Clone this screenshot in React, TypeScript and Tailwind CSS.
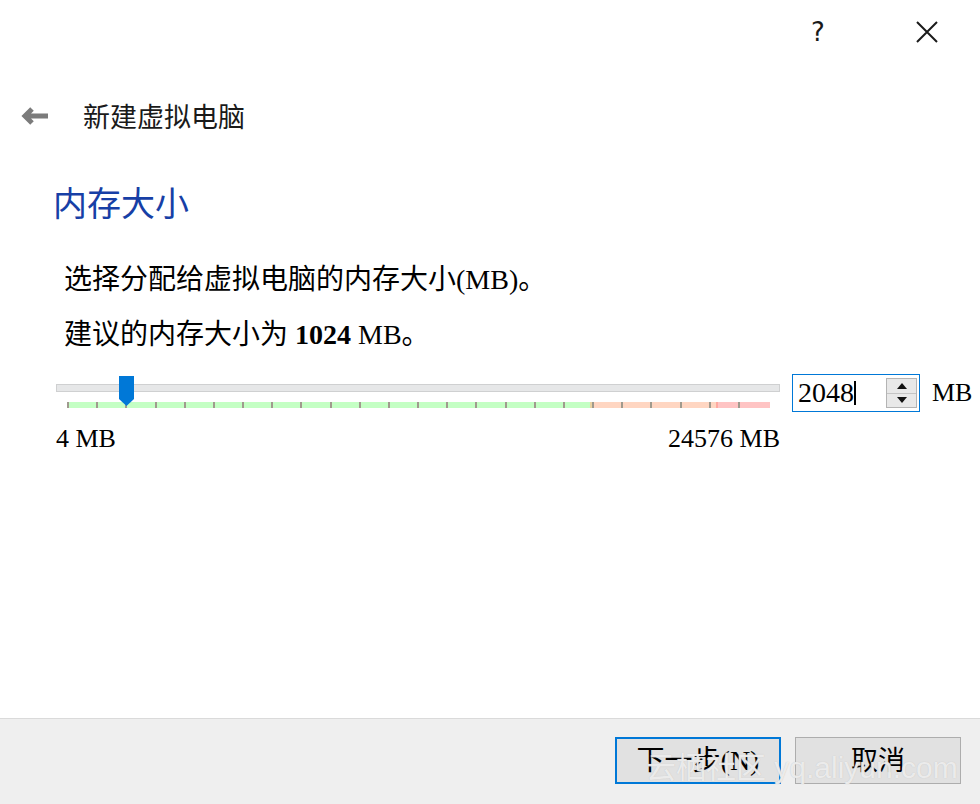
import React from "react";

const serif = "font-['Liberation_Serif','Noto_Sans_CJK_SC',serif]";

const TICK_START = 11; // relative to tick bar area start at x=56
const STEP = 29.17;

export default function App() {
  const ticks = Array.from({ length: 24 }, (_, i) => i);
  return (
    <div className="relative w-[980px] h-[804px] bg-white flex flex-col text-black overflow-hidden font-['Noto_Sans_CJK_SC',sans-serif]">
      {/* top bar */}
      <div className="h-[64px] flex items-center justify-end">
        <span className="text-[26px] leading-none w-[20px] text-center font-['DejaVu_Sans',sans-serif] text-[#1a1a1a]">?</span>
        <div className="ml-[88px] mr-[42px] w-[22px] h-[22px]">
          <svg width="22" height="22" viewBox="0 0 22 22">
            <path d="M1 1 L21 21 M21 1 L1 21" stroke="#1a1a1a" strokeWidth="2" fill="none" />
          </svg>
        </div>
      </div>

      {/* back row */}
      <div className="h-[104px] flex items-center">
        <div className="ml-[20px] w-[28px] h-[20px]">
          <svg width="28" height="20" viewBox="0 0 28 20">
            <path d="M28 10 H5 M12 3 L5 10 L12 17" stroke="#7b7b7b" strokeWidth="5" fill="none" strokeLinejoin="miter" />
          </svg>
        </div>
        <span className="ml-[35px] text-[27px] leading-[34px] text-[#1a1a1a]">新建虚拟电脑</span>
      </div>

      {/* content */}
      <div className="flex flex-col">
        <div className={`mt-[17px] ml-[53px] h-[40px] leading-[40px] text-[34px] text-[#173fa6] ${serif}`}>内存大小</div>
        <div className={`mt-[37px] ml-[64px] h-[36px] leading-[36px] text-[28px] ${serif}`}>选择分配给虚拟电脑的内存大小(MB)。</div>
        <div className={`mt-[19px] ml-[64px] h-[36px] leading-[36px] text-[28px] ${serif}`}>
          建议的内存大小为 <b className="font-bold">1024</b> MB。
        </div>

        {/* slider row */}
        <div className="mt-[21px] ml-[56px] flex h-[38px]">
          <div className="relative w-[724px] h-[38px]">
            <div className="mt-[10px] h-[8px] bg-[#e6e7e8] border border-[#cfd0d1]" />
            <div className="relative mt-[10px] ml-[11px] w-[703px] h-[6px] flex">
              <div className="w-[523px] bg-[#c4ffc4]" />
              <div className="w-[2px] bg-[#ead3a2]" />
              <div className="w-[124px] bg-[#ffd6c2]" />
              <div className="w-[2px] bg-[#ffa9a0]" />
              <div className="flex-1 bg-[#ffc4c4]" />
              {ticks.map((i) => (
                <div
                  key={i}
                  className="absolute top-0 w-[2px] h-[6px] bg-[#a09a8e]"
                  style={{ left: Math.round(i * STEP) }}
                />
              ))}
            </div>
            {/* thumb */}
            <svg className="absolute top-[2px]" style={{ left: TICK_START + 2 * STEP - 7 + 1 }} width="15" height="30" viewBox="0 0 15 30">
              <path d="M0 0 H15 V23 L7.5 30 L0 23 Z" fill="#0078d7" />
            </svg>
          </div>

          {/* spinbox */}
          <div className="ml-[12px] w-[128px] h-[38px] border border-[#0078d7] flex items-center">
            <span className={`ml-[5px] text-[28px] leading-[30px] ${serif}`}>2048</span>
            <div className="w-[2px] h-[24px] bg-black" />
            <div className="ml-auto mr-[2px] w-[31px] h-[30px] flex flex-col border border-[#b4b4b4] bg-[#e8e8e8]">
              <div className="flex-1 flex items-center justify-center border-b border-[#c4c4c4]">
                <svg width="10" height="6" viewBox="0 0 10 6"><path d="M0 6 L5 0 L10 6 Z" fill="#111" /></svg>
              </div>
              <div className="flex-1 flex items-center justify-center">
                <svg width="10" height="6" viewBox="0 0 10 6"><path d="M0 0 L5 6 L10 0 Z" fill="#111" /></svg>
              </div>
            </div>
          </div>
          <span className={`ml-[12px] mt-[4px] text-[26px] leading-[30px] ${serif}`}>MB</span>
        </div>

        {/* labels */}
        <div className={`mt-[12px] ml-[56px] w-[724px] flex justify-between text-[26px] leading-[30px] ${serif}`}>
          <span>4 MB</span>
          <span>24576 MB</span>
        </div>
      </div>

      <div className="flex-1" />

      {/* bottom bar */}
      <div className="h-[86px] border-t border-[#dadada] bg-[#efefef] flex justify-end items-start pt-[18px] pr-[19px] gap-[14px]">
        <button className={`w-[166px] h-[47px] border-2 border-[#0078d7] bg-[#e1e1e1] text-[28px] leading-[34px] ${serif}`}>下一步(N)</button>
        <button className={`w-[166px] h-[47px] border border-[#adadad] bg-[#e1e1e1] text-[27px] leading-[34px] ${serif}`}>取消</button>
      </div>

      {/* watermark */}
      <span className="absolute left-[646px] top-[748px] whitespace-nowrap text-[30px] leading-[40px] text-white/70 [text-shadow:0_0_1px_#bdbdbd] font-['Liberation_Sans','Noto_Sans_CJK_SC',sans-serif] pointer-events-none">
        云栖社区 yq.aliyun.com
      </span>
    </div>
  );
}
